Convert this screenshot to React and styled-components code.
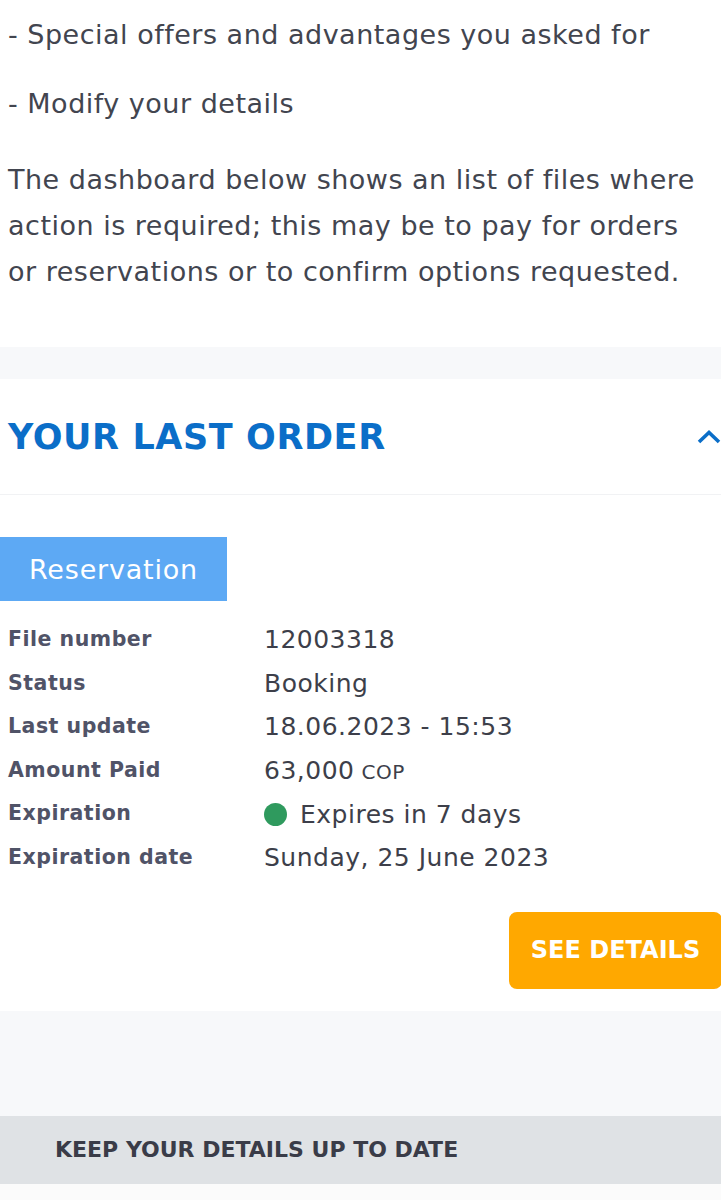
import React from 'react'
import styled, { createGlobalStyle } from 'styled-components'

const GlobalStyle = createGlobalStyle`
  html, body {
    margin: 0;
    padding: 0;
    background: #fafafa;
  }
  body {
    font-family: 'DejaVu Sans', 'Open Sans', sans-serif;
    color: #3d404c;
  }
  * {
    box-sizing: border-box;
  }
`

const Page = styled.div`
  width: 721px;
  overflow: hidden;
`

const Intro = styled.section`
  background: #ffffff;
  padding: 12px 12px 52px 8px;
`

const IntroLine = styled.p`
  margin: 0 0 ${(p) => p.$gap || 0}px;
  font-size: 27px;
  line-height: 46px;
  font-weight: 400;
  color: #42454f;
  letter-spacing: 0.5px;
`

const Band = styled.div`
  height: ${(p) => p.$h}px;
  background: #f7f8fa;
`

const Card = styled.section`
  background: #ffffff;
  padding-bottom: 22px;
`

const CardHeader = styled.div`
  height: 116px;
  display: flex;
  align-items: center;
  justify-content: space-between;
  padding: 0 0 0 8px;
  border-bottom: 1px solid #f1f2f4;
`

const Heading = styled.h2`
  margin: 0;
  font-size: 35px;
  font-weight: 700;
  color: #0b6ec8;
  letter-spacing: 0.6px;
`

const Chevron = styled.svg`
  width: 24px;
  height: 16px;
  flex: none;
`

const CardBody = styled.div`
  padding-top: 42px;
`

const Tag = styled.div`
  display: inline-flex;
  align-items: center;
  justify-content: center;
  width: 227px;
  height: 64px;
  background: #5da9f4;
  color: #ffffff;
  font-size: 27px;
  font-weight: 400;
  letter-spacing: 0.8px;
`

const Details = styled.dl`
  display: grid;
  grid-template-columns: 256px 1fr;
  grid-auto-rows: 43.6px;
  align-items: center;
  margin: 17px 0 0;
  padding-left: 8px;
`

const Label = styled.dt`
  font-size: 20.5px;
  font-weight: 700;
  color: #505367;
  margin: 0;
  line-height: 1;
  padding-bottom: 1px;
  letter-spacing: 0.5px;
`

const Value = styled.dd`
  margin: 0;
  font-size: 25px;
  font-weight: 400;
  color: #3d3f4a;
  display: flex;
  align-items: center;
  gap: 13px;
  letter-spacing: 0.5px;
`

const Currency = styled.span`
  font-size: 20px;
  margin-left: 7px;
`

const Dot = styled.span`
  width: 23px;
  height: 23px;
  border-radius: 50%;
  background: #2f9a5e;
  flex: none;
`

const Actions = styled.div`
  display: flex;
  justify-content: flex-end;
  margin-top: 32px;
`

const DetailsButton = styled.button`
  width: 213px;
  height: 77px;
  margin-right: -1px;
  border: none;
  border-radius: 8px;
  background: #ffa800;
  color: #ffffff;
  font-family: inherit;
  font-size: 24px;
  font-weight: 700;
  letter-spacing: 0;
  cursor: pointer;
`

const Banner = styled.div`
  height: 68px;
  display: flex;
  align-items: center;
  padding-left: 55px;
  background: #dfe2e5;
  color: #3a3c48;
  font-size: 22px;
  font-weight: 700;
  letter-spacing: 0;
`

const Footer = styled.div`
  height: 16px;
  background: #fbfbfb;
`

const rows = [
  { label: 'File number', value: '12003318' },
  { label: 'Status', value: 'Booking' },
  { label: 'Last update', value: '18.06.2023 - 15:53' },
  { label: 'Amount Paid', value: '63,000', currency: 'COP' },
  { label: 'Expiration', value: 'Expires in 7 days', dot: true },
  { label: 'Expiration date', value: 'Sunday, 25 June 2023' },
]

export default function App() {
  return (
    <Page>
      <GlobalStyle />
      <Intro>
        <IntroLine $gap={23}>- Special offers and advantages you asked for</IntroLine>
        <IntroLine $gap={30}>- Modify your details</IntroLine>
        <IntroLine>
          The dashboard below shows an list of files where action is required; this may be to pay for orders
          or reservations or to confirm options requested.
        </IntroLine>
      </Intro>
      <Band $h={32} />
      <Card>
        <CardHeader>
          <Heading>YOUR LAST ORDER</Heading>
          <Chevron viewBox="0 0 24 16">
            <path d="M2 13 L12 3.5 L22 13" fill="none" stroke="#0b6ec8" strokeWidth="3.6" />
          </Chevron>
        </CardHeader>
        <CardBody>
          <Tag>Reservation</Tag>
          <Details>
            {rows.map((r) => (
              <React.Fragment key={r.label}>
                <Label>{r.label}</Label>
                <Value>
                  {r.dot && <Dot />}
                  <span>
                    {r.value}
                    {r.currency && <Currency>{r.currency}</Currency>}
                  </span>
                </Value>
              </React.Fragment>
            ))}
          </Details>
          <Actions>
            <DetailsButton>SEE DETAILS</DetailsButton>
          </Actions>
        </CardBody>
      </Card>
      <Band $h={105} />
      <Banner>KEEP YOUR DETAILS UP TO DATE</Banner>
      <Footer />
    </Page>
  )
}
